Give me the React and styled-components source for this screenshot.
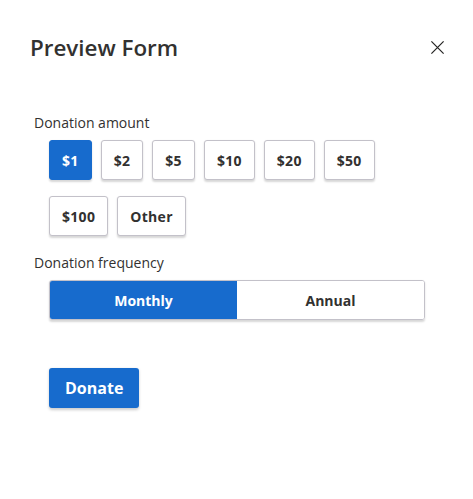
import React, { useState } from 'react';
import styled, { createGlobalStyle } from 'styled-components';

const GlobalStyle = createGlobalStyle`
    body {
        margin: 0;
        background: #ffffff;
        font-family: "Open Sans", "Noto Sans", "Liberation Sans", sans-serif;
        color: #323130;
    }
`;

const Panel = styled.div`
    padding: 30px 28px 40px 30px;
`;

const Header = styled.div`
    display: flex;
    justify-content: space-between;
    align-items: center;
    height: 34px;
`;

const Title = styled.h1`
    margin: 0;
    font-size: 22.4px;
    font-weight: 600;
    color: #323130;
`;

const CloseButton = styled.button`
    border: none;
    background: none;
    padding: 0;
    width: 16px;
    height: 16px;
    display: flex;
    align-items: center;
    justify-content: center;
    cursor: pointer;
`;

const Form = styled.div`
    margin-top: 49px;
    padding-left: 4px;
`;

const Label = styled.div`
    font-size: 14px;
    color: #323130;
    line-height: 20px;
    margin-bottom: 7px;
`;

const AmountGrid = styled.div`
    display: flex;
    flex-wrap: wrap;
    gap: 16px 9px;
    padding-left: 15px;
    width: 340px;
    margin-bottom: 17px;
`;

const AmountButton = styled.button`
    height: 40px;
    padding: 0 12px;
    min-width: 42px;
    border-radius: 3px;
    border: 1px solid ${p => (p.$active ? '#176bcd' : '#c3c1c9')};
    background: ${p => (p.$active ? '#176bcd' : '#ffffff')};
    color: ${p => (p.$active ? '#ffffff' : '#323130')};
    font-family: inherit;
    font-size: 14px;
    font-weight: 700;
    letter-spacing: 0.3px;
    box-shadow: 0 1.5px 2px rgba(0, 0, 0, 0.16);
    cursor: pointer;
`;

const Toggle = styled.div`
    display: grid;
    grid-template-columns: 1fr 1fr;
    margin-left: 15px;
    width: 376px;
    height: 40px;
    border-radius: 3px;
    border: 1px solid #c3c1c9;
    box-sizing: border-box;
    overflow: hidden;
    box-shadow: 0 1.5px 2px rgba(0, 0, 0, 0.16);
`;

const ToggleOption = styled.button`
    border: none;
    background: ${p => (p.$active ? '#176bcd' : '#ffffff')};
    color: ${p => (p.$active ? '#ffffff' : '#323130')};
    font-family: inherit;
    font-size: 14px;
    font-weight: 700;
    cursor: pointer;
`;

const SubmitButton = styled.button`
    margin-top: 48px;
    margin-left: 15px;
    height: 40px;
    padding: 0 16px;
    border: none;
    border-radius: 3px;
    background: #176bcd;
    color: #ffffff;
    font-family: inherit;
    font-size: 16px;
    font-weight: 700;
    box-shadow: 0 1.5px 3px rgba(0, 0, 0, 0.2);
    cursor: pointer;
`;

const amounts = ['$1', '$2', '$5', '$10', '$20', '$50', '$100', 'Other'];

const App = () => {
    const [amount, setAmount] = useState('$1');
    const [frequency, setFrequency] = useState('Monthly');

    return (
        <Panel>
            <GlobalStyle />
            <Header>
                <Title>Preview Form</Title>
                <CloseButton aria-label="Close">
                    <svg width="15" height="15" viewBox="0 0 16 16">
                        <path d="M1.5 1.5 L14.5 14.5 M14.5 1.5 L1.5 14.5" stroke="#252423" strokeWidth="1.3" fill="none" />
                    </svg>
                </CloseButton>
            </Header>
            <Form>
                <Label>Donation amount</Label>
                <AmountGrid>
                    {amounts.map(a => (
                        <AmountButton key={a} $active={amount === a} onClick={() => setAmount(a)}>
                            {a}
                        </AmountButton>
                    ))}
                </AmountGrid>
                <Label>Donation frequency</Label>
                <Toggle>
                    {['Monthly', 'Annual'].map(f => (
                        <ToggleOption key={f} $active={frequency === f} onClick={() => setFrequency(f)}>
                            {f}
                        </ToggleOption>
                    ))}
                </Toggle>
                <SubmitButton>Donate</SubmitButton>
            </Form>
        </Panel>
    );
};

export default App;
